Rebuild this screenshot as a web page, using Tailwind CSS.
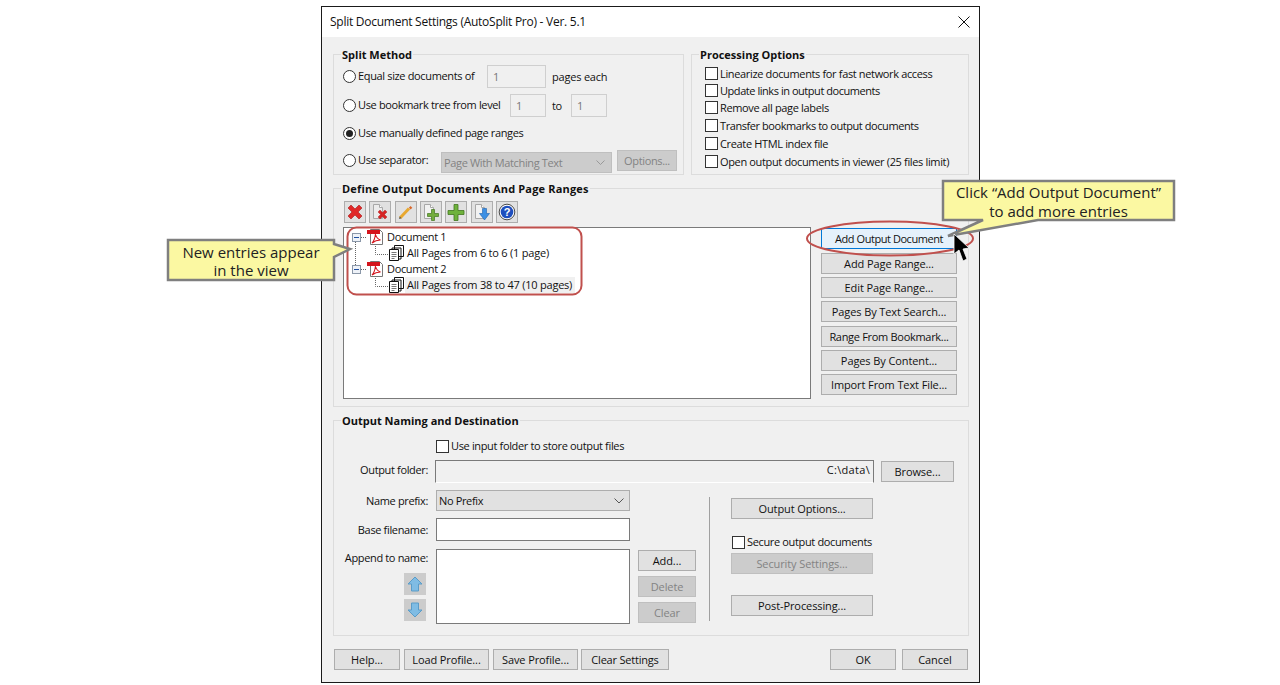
<!DOCTYPE html>
<html lang="en">
<head>
  <meta charset="UTF-8" />
  <title>Split Document Settings</title>
  <script src="https://cdn.jsdelivr.net/npm/@tailwindcss/browser@4"></script>
</head>
<body class="bg-white">
<div class="relative w-[1280px] h-[685px] overflow-hidden bg-white font-['Open_Sans',sans-serif] text-[11px] leading-[14px] tracking-[-0.35px] text-[#111]">

  <!-- Dialog -->
  <div class="ml-[321px] mt-[6px] w-[659px] h-[677px] border border-[#1a1a1a] bg-[#f0f0f0] flex flex-col">
    <div class="h-[30px] bg-white flex items-center justify-between pl-[8px] pr-[9px] text-[12px] tracking-[-0.26px]">
      <span>Split Document Settings (AutoSplit Pro) - Ver. 5.1</span>
      <svg width="12" height="12" viewBox="0 0 12 12"><path d="M.5.5l11 11M11.5.5l-11 11" stroke="#111" fill="none"/></svg>
    </div>

    <div class="flex-1 pl-[11px] pr-[10px] pt-[17px]">
      <div class="flex gap-[7px]">
        <!-- Split Method -->
        <div class="relative w-[351px] h-[121px] border border-[#dcdcdc] pl-[9px] pt-[10px]">
          <span class="absolute -top-[7px] left-[7px] px-[1px] bg-[#f0f0f0] font-bold tracking-normal">Split Method</span>
          <div class="flex items-center h-[23px]">
            <span class="w-[13px] h-[13px] rounded-full border border-[#333] bg-white"></span>
            <span class="ml-[2px] w-[129px] -mt-[2px]">Equal size documents of</span>
            <span class="w-[59px] h-[23px] border border-[#cfcfcf] pl-[5px] flex items-center text-[#777]">1</span>
            <span class="ml-[6px] mt-[1px] tracking-[-0.2px]">pages each</span>
          </div>
          <div class="flex items-center h-[23px] mt-[6px]">
            <span class="w-[13px] h-[13px] rounded-full border border-[#333] bg-white"></span>
            <span class="ml-[2px] w-[152px] -mt-[1px]">Use bookmark tree from level</span>
            <span class="w-[36px] h-[23px] border border-[#cfcfcf] pl-[5px] flex items-center text-[#777]">1</span>
            <span class="ml-[6px] w-[19px] mt-[1px]">to</span>
            <span class="w-[36px] h-[23px] border border-[#cfcfcf] pl-[5px] flex items-center text-[#777]">1</span>
          </div>
          <div class="flex items-center h-[20px] mt-[6px]">
            <span class="w-[13px] h-[13px] rounded-full border border-[#333] bg-white flex items-center justify-center"><span class="w-[7px] h-[7px] rounded-full bg-[#222]"></span></span>
            <span class="ml-[2px]">Use manually defined page ranges</span>
          </div>
          <div class="flex h-[23px] mt-[7px]">
            <span class="w-[13px] h-[13px] mt-[4px] rounded-full border border-[#333] bg-white"></span>
            <span class="ml-[2px] w-[83px] mt-[3px]">Use separator:</span>
            <span class="w-[171px] h-[21px] mt-[2px] border border-[#bfbfbf] bg-[#cccccc] pl-[2px] pr-[6px] flex items-center justify-between text-[#838383]">Page With Matching Text
              <svg width="9" height="5" viewBox="0 0 9 5"><path d="M.5.5l4 4 4-4" stroke="#999" fill="none"/></svg>
            </span>
            <span class="ml-[5px] w-[60px] h-[21px] border border-[#bfbfbf] bg-[#cccccc] flex items-center justify-center text-[#838383]">Options...</span>
          </div>
        </div>
        <!-- Processing Options -->
        <div class="relative w-[278px] h-[121px] border border-[#dcdcdc] pl-[13px] pt-[12px]">
          <span class="absolute -top-[7px] left-[7px] px-[1px] bg-[#f0f0f0] font-bold tracking-normal">Processing Options</span>
          <div class="flex items-center h-[13px]"><span class="w-[13px] h-[13px] border border-[#333] bg-white"></span><span class="ml-[2px]">Linearize documents for fast network access</span></div>
          <div class="flex items-center h-[13px] mt-[4px]"><span class="w-[13px] h-[13px] border border-[#333] bg-white"></span><span class="ml-[2px] tracking-[-0.45px]">Update links in output documents</span></div>
          <div class="flex items-center h-[13px] mt-[4px]"><span class="w-[13px] h-[13px] border border-[#333] bg-white"></span><span class="ml-[2px]">Remove all page labels</span></div>
          <div class="flex items-center h-[13px] mt-[5px]"><span class="w-[13px] h-[13px] border border-[#333] bg-white"></span><span class="ml-[2px] tracking-[-0.43px]">Transfer bookmarks to output documents</span></div>
          <div class="flex items-center h-[13px] mt-[5px]"><span class="w-[13px] h-[13px] border border-[#333] bg-white"></span><span class="ml-[2px]">Create HTML index file</span></div>
          <div class="flex items-center h-[13px] mt-[5px]"><span class="w-[13px] h-[13px] border border-[#333] bg-white"></span><span class="ml-[2px]">Open output documents in viewer (25 files limit)</span></div>
        </div>
      </div>

      <!-- Define Output Documents -->
      <div class="relative w-[636px] h-[219px] mt-[13px] border border-[#dcdcdc] pl-[9px] pt-[12px]">
        <span class="absolute -top-[7px] left-[7px] px-[1px] bg-[#f0f0f0] font-bold tracking-[0.17px]">Define Output Documents And Page Ranges</span>
        <div class="flex gap-[3.33px] ml-[1px]">
          <span class="w-[22px] h-[22px] border border-[#adadad] bg-[#e1e1e1] flex items-center justify-center">
            <svg width="18" height="18" viewBox="0 0 18 18"><path d="M2 5l3-3 4 4 4-4 3 3-4 4 4 4-3 3-4-4-4 4-3-3 4-4z" fill="#e02828" stroke="#a81a1a" stroke-width=".6"/></svg>
          </span>
          <span class="w-[22px] h-[22px] border border-[#adadad] bg-[#e1e1e1] flex items-center justify-center">
            <svg width="18" height="18" viewBox="0 0 18 18"><path d="M2.500 1.500h6l3 3v11h-9z" fill="#ececec" stroke="#a8a8a8"/><path d="M8.500 1.500v3h3" fill="#fff" stroke="#a8a8a8"/><path d="M7 9l2-2 2.500 2.500L14 7l2 2-2.500 2.500L16 14l-2 2-2.500-2.500L9 16l-2-2 2.500-2.500z" fill="#d62424" stroke="#a81a1a" stroke-width=".4"/></svg>
          </span>
          <span class="w-[22px] h-[22px] border border-[#adadad] bg-[#e1e1e1] flex items-center justify-center">
            <svg width="18" height="18" viewBox="0 0 18 18"><path d="M3 15l9-9.500" stroke="#e8a830" stroke-width="3" fill="none"/><path d="M13.500 3l1.800 1.800-1.600 1.700-1.800-1.800z" fill="#d9662a"/><path d="M2 16l.800-2.500 1.700 1.700z" fill="#555"/></svg>
          </span>
          <span class="w-[22px] h-[22px] border border-[#adadad] bg-[#e1e1e1] flex items-center justify-center">
            <svg width="18" height="18" viewBox="0 0 18 18"><path d="M2.500 1.500h6l3 3v11h-9z" fill="#f2f2f2" stroke="#a8a8a8"/><path d="M8.500 1.500v3h3" fill="#fff" stroke="#a8a8a8"/><path d="M9.500 6.500h3v4h4v3h-4v4h-3v-4h-4v-3h4z" fill="#74ad3e" stroke="#42761f" stroke-width=".7"/></svg>
          </span>
          <span class="w-[22px] h-[22px] border border-[#adadad] bg-[#e1e1e1] flex items-center justify-center">
            <svg width="18" height="18" viewBox="0 0 18 18"><path d="M7 1.500h4v6h6v4h-6v6H7v-6H1v-4h6z" fill="#6fb23c" stroke="#42761f" stroke-width=".8"/></svg>
          </span>
          <span class="w-[22px] h-[22px] border border-[#adadad] bg-[#e1e1e1] flex items-center justify-center">
            <svg width="18" height="18" viewBox="0 0 18 18"><path d="M2.500 1.500h6l3 3v11h-9z" fill="#f2f2f2" stroke="#a8a8a8"/><path d="M8.500 1.500v3h3" fill="#fff" stroke="#a8a8a8"/><path d="M9.500 5.500h4v5H16.500l-5 6.500-5-6.500H9.500z" fill="#3d90e4" stroke="#1f62ad" stroke-width=".6"/></svg>
          </span>
          <span class="w-[22px] h-[22px] border border-[#adadad] bg-[#e1e1e1] flex items-center justify-center">
            <svg width="18" height="18" viewBox="0 0 18 18"><circle cx="9" cy="9" r="7.800" fill="#fff" stroke="#222" stroke-width=".8"/><circle cx="9" cy="9" r="6.300" fill="#1e4fbe"/><text x="9" y="13" text-anchor="middle" font-size="11" font-weight="700" fill="#fff" font-family="Liberation Sans">?</text></svg>
          </span>
        </div>
        <div class="flex mt-[4px]">
          <!-- Tree -->
          <div class="relative w-[468px] h-[172px] border border-[#7a7a7a] bg-white pt-[1px] tracking-[-0.22px]">
            <svg class="absolute left-0 top-0" width="70" height="70">
              <path d="M11.500 14v24M17 9.500h6M31.500 18v8.500h13M17 41.500h6M31.500 50v8.500h13" stroke="#666" stroke-dasharray="1 1" fill="none"/>
              <rect x="8.500" y="5.500" width="8" height="8" fill="#eef2f8" stroke="#8a97a8"/><path d="M10 9.500h5" stroke="#2050a0"/>
              <rect x="8.500" y="37.500" width="8" height="8" fill="#eef2f8" stroke="#8a97a8"/><path d="M10 41.500h5" stroke="#2050a0"/>
            </svg>
            <div class="flex items-center h-[16px] pl-[23px]">
              <svg width="17" height="16" viewBox="0 0 17 16"><path d="M3.500.5h9l3 3v12h-12z" fill="#fff" stroke="#777"/><path d="M0 1h13v4H0z" fill="#d4141c"/><path d="M5 14c2-2 3-5 3.500-9 .5 3 2 5 5 6-3 0-6 1-8.500 3z" fill="none" stroke="#d4141c" stroke-width="1.100"/></svg>
              <span class="ml-[3px] tracking-[-0.35px]">Document 1</span>
            </div>
            <div class="flex items-center h-[16px] pl-[44px]">
              <svg width="16" height="16" viewBox="0 0 16 16"><path d="M6.500.5h9v11h-9zM4 3h9v11H4z" fill="#fff" stroke="#111"/><path d="M1.500 4.500h9v11h-9z" fill="#fff" stroke="#111"/><path d="M3.500 7.500h5M3.500 9.500h5M3.500 11.500h5M3.500 13.500h3" stroke="#777"/></svg>
              <span class="ml-[3px]">All Pages from 6 to 6 (1 page)</span>
            </div>
            <div class="flex items-center h-[16px] pl-[23px]">
              <svg width="17" height="16" viewBox="0 0 17 16"><path d="M3.500.5h9l3 3v12h-12z" fill="#fff" stroke="#777"/><path d="M0 1h13v4H0z" fill="#d4141c"/><path d="M5 14c2-2 3-5 3.500-9 .5 3 2 5 5 6-3 0-6 1-8.500 3z" fill="none" stroke="#d4141c" stroke-width="1.100"/></svg>
              <span class="ml-[3px] tracking-[-0.35px]">Document 2</span>
            </div>
            <div class="flex items-center h-[16px] pl-[44px]">
              <svg width="16" height="16" viewBox="0 0 16 16"><path d="M6.500.5h9v11h-9zM4 3h9v11H4z" fill="#fff" stroke="#111"/><path d="M1.500 4.500h9v11h-9z" fill="#fff" stroke="#111"/><path d="M3.500 7.500h5M3.500 9.500h5M3.500 11.500h5M3.500 13.500h3" stroke="#777"/></svg>
              <span class="ml-[1px] pl-[2px] pr-[3px] bg-[#f0f0f0] h-[16px] flex items-center">All Pages from 38 to 47 (10 pages)</span>
            </div>
          </div>
          <!-- Buttons -->
          <div class="ml-[10px] w-[136px] pt-[1px] flex flex-col tracking-[-0.1px]">
            <span class="h-[21px] border border-[#0078d7] bg-[#e5f1fb] flex items-center justify-center tracking-[-0.45px]">Add Output Document</span>
            <span class="mt-[4px] h-[21px] border border-[#adadad] bg-[#e1e1e1] flex items-center justify-center">Add Page Range...</span>
            <span class="mt-[3px] h-[21px] border border-[#adadad] bg-[#e1e1e1] flex items-center justify-center">Edit Page Range...</span>
            <span class="mt-[3px] h-[21px] border border-[#adadad] bg-[#e1e1e1] flex items-center justify-center">Pages By Text Search...</span>
            <span class="mt-[4px] h-[21px] border border-[#adadad] bg-[#e1e1e1] flex items-center justify-center tracking-[-0.3px]">Range From Bookmark...</span>
            <span class="mt-[3px] h-[21px] border border-[#adadad] bg-[#e1e1e1] flex items-center justify-center">Pages By Content...</span>
            <span class="mt-[3px] h-[21px] border border-[#adadad] bg-[#e1e1e1] flex items-center justify-center">Import From Text File...</span>
          </div>
        </div>
      </div>

      <!-- Output Naming -->
      <div class="relative w-[636px] h-[216px] mt-[13px] border border-[#dcdcdc] pt-[19px]">
        <span class="absolute -top-[7px] left-[7px] px-[1px] bg-[#f0f0f0] font-bold tracking-normal">Output Naming and Destination</span>
        <div class="flex items-center h-[13px] ml-[102px]"><span class="w-[13px] h-[13px] border border-[#333] bg-white"></span><span class="ml-[2px] -mt-[2px]">Use input folder to store output files</span></div>
        <div class="flex mt-[7px]">
          <span class="w-[94px] text-right h-[23px] pb-[3px] flex items-center justify-end">Output folder:</span>
          <span class="ml-[7px] w-[439px] h-[23px] border border-[#7a7a7a] border-b-white pr-[3px] pb-[3px] flex items-center justify-end tracking-[0.3px]">C:\data\</span>
          <span class="ml-[7px] mt-[1px] w-[73px] h-[21px] border border-[#adadad] bg-[#e1e1e1] flex items-center justify-center tracking-[-0.1px]">Browse...</span>
        </div>
        <div class="flex mt-[7px]">
          <div class="w-[362px]">
            <div class="flex h-[21px]">
              <span class="w-[94px] pt-[1px] flex items-center justify-end">Name prefix:</span>
              <span class="ml-[8px] w-[194px] border border-[#adadad] bg-[#e1e1e1] pl-[2px] pr-[5px] flex items-center justify-between">No Prefix
                <svg width="10" height="6" viewBox="0 0 10 6"><path d="M.5.5l4.500 4.500 4.500-4.500" stroke="#555" fill="none"/></svg>
              </span>
            </div>
            <div class="flex h-[23px] mt-[7px]">
              <span class="w-[94px] flex items-center justify-end">Base filename:</span>
              <span class="ml-[8px] w-[194px] border border-[#7a7a7a] bg-white"></span>
            </div>
            <div class="flex h-[75px] mt-[8px]">
              <div class="w-[94px] flex flex-col items-end">
                <span class="h-[18px] flex items-center">Append to name:</span>
                <span class="mt-[6px] mr-[2px] w-[22px] h-[22px] bg-[#cccccc] flex items-center justify-center">
                  <svg width="16" height="16" viewBox="0 0 16 16"><path d="M8 1l7 7h-3.500v7h-7V8H1z" fill="#7fbce4" stroke="#5a9cc8"/></svg>
                </span>
                <span class="mt-[4px] mr-[2px] w-[22px] h-[22px] bg-[#cccccc] flex items-center justify-center">
                  <svg width="16" height="16" viewBox="0 0 16 16"><path d="M8 15l7-7h-3.500V1h-7v7H1z" fill="#7fbce4" stroke="#5a9cc8"/></svg>
                </span>
              </div>
              <span class="ml-[8px] w-[194px] border border-[#7a7a7a] bg-white"></span>
              <div class="ml-[8px] w-[58px] pt-[1px] flex flex-col gap-[5px] tracking-[-0.1px]">
                <span class="h-[21px] border border-[#adadad] bg-[#e1e1e1] flex items-center justify-center">Add...</span>
                <span class="h-[21px] border border-[#bfbfbf] bg-[#cccccc] text-[#838383] flex items-center justify-center">Delete</span>
                <span class="h-[21px] border border-[#bfbfbf] bg-[#cccccc] text-[#838383] flex items-center justify-center">Clear</span>
              </div>
            </div>
          </div>
          <div class="ml-[13px] mt-[7px] w-px h-[124px] bg-[#a0a0a0]"></div>
          <div class="ml-[21px] w-[142px] pt-[8px] tracking-[-0.1px]">
            <span class="h-[21px] border border-[#adadad] bg-[#e1e1e1] flex items-center justify-center">Output Options...</span>
            <div class="flex items-center h-[13px] mt-[17px] ml-[1px] tracking-[-0.35px]"><span class="w-[13px] h-[13px] border border-[#333] bg-white"></span><span class="ml-[2px] -mt-[2px]">Secure output documents</span></div>
            <span class="mt-[4px] h-[21px] border border-[#bfbfbf] bg-[#cccccc] text-[#838383] flex items-center justify-center">Security Settings...</span>
            <span class="mt-[21px] h-[21px] border border-[#adadad] bg-[#e1e1e1] flex items-center justify-center">Post-Processing...</span>
          </div>
        </div>
      </div>

      <!-- Footer buttons -->
      <div class="flex justify-between mt-[13px] ml-[1px] pr-[1px] tracking-[-0.1px]">
        <div class="flex gap-[4px]">
          <span class="w-[66px] h-[21px] border border-[#adadad] bg-[#e1e1e1] flex items-center justify-center">Help...</span>
          <span class="w-[85px] h-[21px] border border-[#adadad] bg-[#e1e1e1] flex items-center justify-center">Load Profile...</span>
          <span class="w-[85px] h-[21px] border border-[#adadad] bg-[#e1e1e1] flex items-center justify-center">Save Profile...</span>
          <span class="-ml-[1px] w-[88px] h-[21px] border border-[#adadad] bg-[#e1e1e1] flex items-center justify-center tracking-[-0.2px]">Clear Settings</span>
        </div>
        <div class="flex gap-[6px]">
          <span class="w-[66px] h-[21px] border border-[#adadad] bg-[#e1e1e1] flex items-center justify-center">OK</span>
          <span class="w-[66px] h-[21px] border border-[#adadad] bg-[#e1e1e1] flex items-center justify-center">Cancel</span>
        </div>
      </div>
    </div>
  </div>

  <!-- Annotations over the screenshot -->
  <svg class="absolute left-0 top-0 pointer-events-none" width="1280" height="685">
    <rect x="347.500" y="227.500" width="234" height="67" rx="9" fill="none" stroke="#c0504d" stroke-width="2"/>
    <ellipse cx="890" cy="238.500" rx="83" ry="17" fill="none" stroke="#c0504d" stroke-width="2"/>
    <path d="M168 240H334V244L350 249L334 257V280H168Z" fill="#fbf8a2" stroke="#7f7f7f" stroke-width="2.500"/>
    <path d="M943 181H1174V220H1038L948 236L983 220H943Z" fill="#fbf8a2" stroke="#7f7f7f" stroke-width="2.500"/>
    <path d="M954 234L954 254L959 250L963 261L967 259L963 249L969 248Z" fill="#000" stroke="#fff" stroke-width=".8"/>
  </svg>
  <div class="absolute left-[168px] top-[243px] w-[166px] text-center text-[15px] leading-[18px] tracking-normal text-[#222]">New entries appear<br />in the view</div>
  <div class="absolute left-[943px] top-[183px] w-[231px] text-center text-[15px] leading-[19px] tracking-normal text-[#222]">Click “Add Output Document”<br />to add more entries</div>
</div>
</body>
</html>
